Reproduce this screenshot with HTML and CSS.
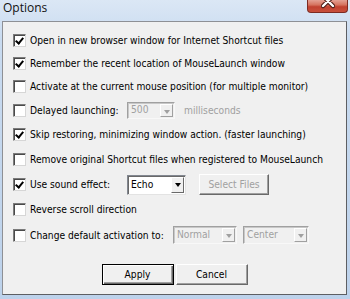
FILE: index.html
```html
<!DOCTYPE html>
<html lang="en">
<head>
<meta charset="UTF-8">
<title>Options</title>
<link rel="stylesheet" href="styles.css">
</head>
<body>
<div class="window">
  <div class="titlebar">
    <span class="title">Options</span>
    <div class="close-btn">
      <svg width="14" height="10" viewBox="0 0 14 10"><path d="M2 -3 L12 7 M12 -3 L2 7" stroke="#4a1a14" stroke-width="4.5" stroke-linecap="round"/><path d="M2 -3 L12 7 M12 -3 L2 7" stroke="#fff" stroke-width="2.4" stroke-linecap="round"/></svg>
    </div>
  </div>
  <div class="client">
    <div class="options">
      <div class="row r1"><span class="check on"></span><span>Open in new browser window for Internet Shortcut files</span></div>
      <div class="row r2"><span class="check on"></span><span>Remember the recent location of MouseLaunch window</span></div>
      <div class="row r3"><span class="check"></span><span>Activate at the current mouse position (for multiple monitor)</span></div>
      <div class="row r4"><span class="check"></span><span class="lbl w-short">Delayed launching:</span>
        <span class="combo disabled c-delay"><span class="val">500</span><span class="arrow"></span></span>
        <span class="muted ms">milliseconds</span></div>
      <div class="row r5"><span class="check on"></span><span>Skip restoring, minimizing window action. (faster launching)</span></div>
      <div class="row r6"><span class="check"></span><span>Remove original Shortcut files when registered to MouseLaunch</span></div>
      <div class="row r7"><span class="check on"></span><span class="lbl w-short">Use sound effect:</span>
        <span class="combo c-sound"><span class="val">Echo</span><span class="arrow"></span></span>
        <span class="btn disabled sel-btn">Select Files</span></div>
      <div class="row r8"><span class="check"></span><span>Reverse scroll direction</span></div>
      <div class="row r9"><span class="check"></span><span class="lbl w-long">Change default activation to:</span>
        <span class="combo disabled c-normal"><span class="val">Normal</span><span class="arrow"></span></span>
        <span class="combo disabled c-center"><span class="val">Center</span><span class="arrow"></span></span></div>
    </div>
    <div class="actions">
      <span class="btn default">Apply</span>
      <span class="btn">Cancel</span>
    </div>
  </div>
</div>
</body>
</html>
```

FILE: styles.css
```css
body{
  margin:0;
  font-family:"DejaVu Sans Condensed","DejaVu Sans",sans-serif;
  font-size:10.2px;
  color:#000;
}
.window{
  width:350px;
  height:299px;
  background:linear-gradient(#dbe7f5,#c9dbf0 40px,#bdd2eb);
  display:flex;
  flex-direction:column;
  overflow:hidden;
}
.titlebar{
  height:21px;
  display:flex;
  justify-content:space-between;
  align-items:flex-start;
}
.title{
  font-family:"Open Sans","Noto Sans",sans-serif;
  font-size:12px;
  line-height:16px;
  margin-left:3px;
  color:#111;
}
.close-btn{
  width:39px;
  height:13px;
  margin-right:2px;
  margin-top:-1px;
  border:1px solid #7d2b22;
  border-top:none;
  border-radius:0 0 4px 4px;
  background:linear-gradient(#e7aa9e,#d6735f 45%,#c1412f 60%,#c8503c);
  display:flex;
  justify-content:center;
  align-items:flex-start;
}
.client{
  flex:1;
  margin:0 3px 4px 2px;
  background:#f0f0f0;
  border:1px solid #8e9095;
  border-bottom-color:#5d5f63;
  border-right-color:#5d5f63;
  display:flex;
  flex-direction:column;
}
.options{
  padding:7px 0 0 10px;
  display:flex;
  flex-direction:column;
}
.row{
  display:flex;
  align-items:center;
  white-space:nowrap;
}
.r1,.r2,.r3{height:23px;}
.r4{height:24px;}
.r5,.r6,.r7,.r8{height:25px;}
.r9{height:26px;}
.check{
  width:11px;
  height:11px;
  margin-right:4px;
  background:#fff;
  border:1px solid;
  border-color:#7b7b7b #d6d6d6 #d6d6d6 #7b7b7b;
  box-shadow:inset 1px 1px 0 #4a4a4a;
  flex:none;
  position:relative;
}
.check.on::after{
  content:"";
  position:absolute;
  left:3px;
  top:1px;
  width:3px;
  height:6px;
  border:solid #000;
  border-width:0 2px 2px 0;
  transform:rotate(40deg);
}
.lbl{display:inline-block;}
.w-short{width:97px;}
.w-long{width:143px;}
.combo{
  display:inline-flex;
  align-items:center;
  justify-content:space-between;
  height:16px;
  background:#fff;
  border:1px solid;
  border-color:#828790 #e3e3e3 #e3e3e3 #828790;
  box-shadow:inset 1px 1px 0 #696969;
  padding:1px 1px 1px 3px;
  box-sizing:border-box;
}
.combo .val{line-height:14px;}
.combo .arrow{
  width:13px;
  height:100%;
  box-sizing:border-box;
  background:#f0f0f0;
  border:1px solid;
  border-color:#fff #696969 #696969 #fff;
  position:relative;
}
.combo .arrow::after{
  content:"";
  position:absolute;
  left:3px;
  top:5px;
  border:3px solid transparent;
  border-top:4px solid #000;
  border-bottom:none;
}
.combo.disabled{
  background:#f0f0f0;
  color:#a0a0a0;
  border-color:#a0a0a0 #f8f8f8 #f8f8f8 #a0a0a0;
  box-shadow:inset 1px 1px 0 #c8c8c8;
}
.combo.disabled .arrow{border-color:#fff #a0a0a0 #a0a0a0 #fff;}
.combo.disabled .arrow::after{border-top-color:#a0a0a0;}
.c-delay{width:48px;height:17px;}
.c-sound{width:59px;height:20px;}
.c-normal{width:64px;height:18px;}
.c-center{width:66px;height:18px;margin-left:6px;}
.muted{color:#a0a0a0;}
.ms{margin-left:9px;}
.btn{
  display:inline-flex;
  align-items:center;
  justify-content:center;
  box-sizing:border-box;
  background:#f0f0f0;
  border:1px solid;
  border-color:#fff #696969 #696969 #fff;
  box-shadow:inset -1px -1px 0 #a0a0a0;
}
.btn.disabled{color:#a0a0a0;}
.sel-btn{width:70px;height:21px;margin-left:13px;}
.actions{
  display:flex;
  justify-content:center;
  gap:2px;
  margin-top:auto;
  margin-bottom:9px;
}
.actions .btn{width:72px;height:21px;}
.btn.default{
  border:1px solid #000;
  box-shadow:inset 1px 1px 0 #fff,inset -1px -1px 0 #696969,inset -2px -2px 0 #a0a0a0;
}
```
